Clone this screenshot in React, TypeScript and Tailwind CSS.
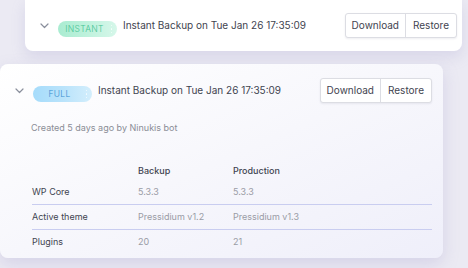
import React from 'react';

const font = { fontFamily: 'Inter, "Noto Sans", sans-serif' };

const Chevron: React.FC = () => (
  <svg width="9" height="6" viewBox="0 0 9 6" fill="none" className="shrink-0">
    <path d="M1 1l3.5 3.5L8 1" stroke="#8a8f9c" strokeWidth="1.2" strokeLinecap="round" strokeLinejoin="round" />
  </svg>
);

const Badge: React.FC<{ label: string; kind: 'instant' | 'full' }> = ({ label, kind }) => {
  const cls =
    kind === 'instant'
      ? 'bg-gradient-to-r from-[#a9ecd1] via-[#bff2dd] to-[#d6f7ea] text-[#46c393]'
      : 'bg-gradient-to-r from-[#a6dcfb] via-[#b9e3fb] to-[#d3eefc] text-[#3a8fd0]';
  return (
    <span className={`relative inline-flex items-center justify-center w-[59px] h-[16px] rounded-full text-[8.5px] font-light tracking-[0.04em] pr-[6px] ${cls}`}>
      {label}
      {/* sparkle dots */}
      <span className="absolute right-[5px] top-[4px] flex flex-col gap-[2px]">
        <span className="w-[1.5px] h-[1.5px] rounded-full bg-white/80" />
        <span className="w-[1.5px] h-[1.5px] rounded-full bg-white/80" />
        <span className="w-[1.5px] h-[1.5px] rounded-full bg-white/80" />
      </span>
    </span>
  );
};

const Actions: React.FC = () => (
  <div className="flex h-[25px] rounded-[3px] border border-[#dcdde3] bg-white shadow-[0_1px_2px_rgba(40,40,80,0.08)] text-[10px] text-[#3f4450]">
    <button className="px-[6px] border-r border-[#dcdde3]">Download</button>
    <button className="px-[7px]">Restore</button>
  </div>
);

const Header: React.FC<{ label: string; kind: 'instant' | 'full' }> = ({ label, kind }) => (
  <div className="flex items-center">
    <Chevron />
    <span className="ml-[9px]"><Badge label={label} kind={kind} /></span>
    <span className="ml-[6px] text-[10px] text-[#3f4450]">Instant Backup on Tue Jan 26 17:35:09</span>
    <span className="flex-1" />
    <Actions />
  </div>
);

const rows = [
  { label: 'WP Core', backup: '5.3.3', prod: '5.3.3' },
  { label: 'Active theme', backup: 'Pressidium v1.2', prod: 'Pressidium v1.3' },
  { label: 'Plugins', backup: '20', prod: '21' },
];

export default function App() {
  return (
    <div style={font} className="w-[468px] h-[268px] overflow-hidden bg-[#ebeaf3]">
      {/* collapsed backup */}
      <div className="ml-[25px] w-[437px] h-[51px] rounded-b-[8px] bg-white shadow-[0_6px_14px_rgba(150,145,200,0.22)] pl-[15px] pr-[5px] pt-[13px]">
        <Header label="INSTANT" kind="instant" />
      </div>

      {/* expanded backup */}
      <div className="mt-[13px] w-[443px] h-[194px] rounded-[8px] bg-gradient-to-br from-white via-[#f7f7fc] to-[#efeffa] shadow-[0_6px_16px_rgba(150,145,200,0.25)] pl-[15px] pr-[11px] pt-[14px]">
        <Header label="FULL" kind="full" />
        <div className="pl-[16px] mt-[18px] text-[9px] text-[#8a8d96]">Created 5 days ago by Ninukis bot</div>

        <div className="pl-[17px] mt-[28px] text-[9px]">
          <div className="flex h-[17px] items-center font-medium text-[#3f4450]">
            <span className="w-[106px]" />
            <span className="w-[95px]">Backup</span>
            <span>Production</span>
          </div>
          {rows.map((r, i) => (
            <div
              key={r.label}
              className={`flex h-[25px] items-center ${i < rows.length - 1 ? 'border-b border-[#c9cdf0]' : ''}`}
            >
              <span className="w-[106px] text-[#3f4450]">{r.label}</span>
              <span className="w-[95px] text-[#9a9ca5]">{r.backup}</span>
              <span className="text-[#9a9ca5]">{r.prod}</span>
            </div>
          ))}
        </div>
      </div>
    </div>
  );
}
